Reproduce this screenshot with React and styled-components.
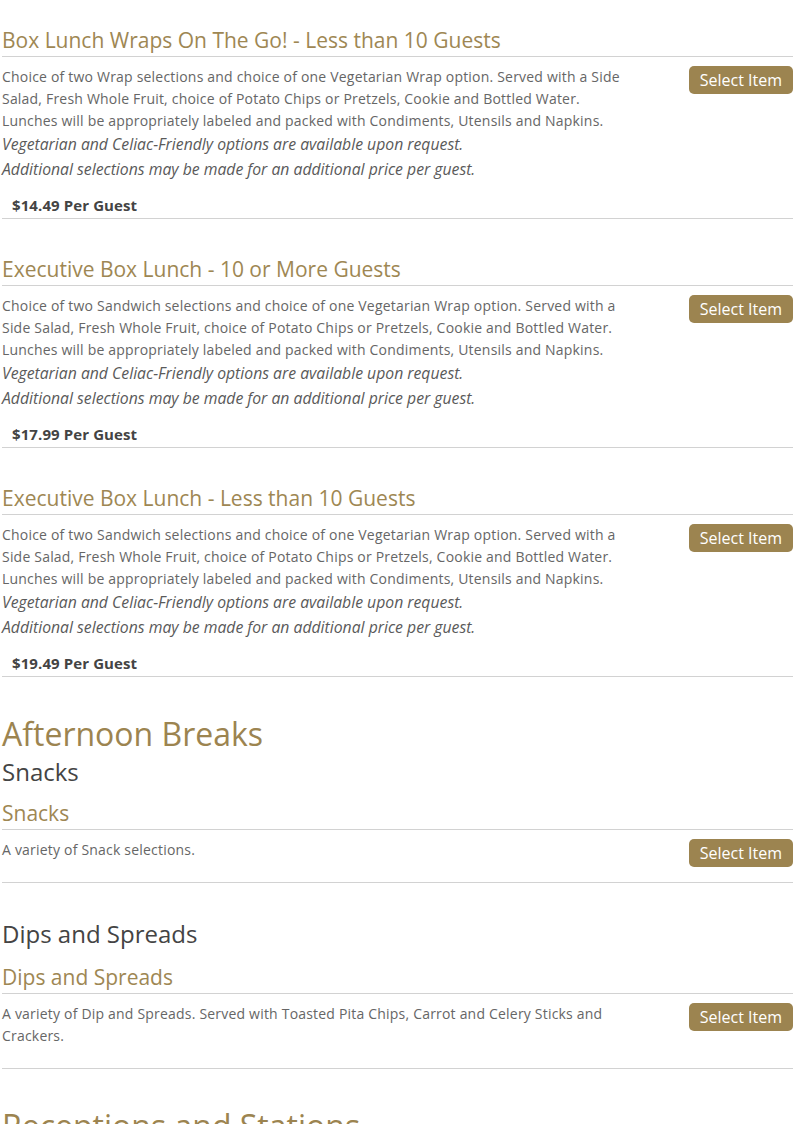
import styled, { createGlobalStyle } from "styled-components";

const GlobalStyle = createGlobalStyle`
  body {
    margin: 0;
    background: #fff;
    font-family: "Open Sans", "Liberation Sans", sans-serif;
    color: #555;
  }
`;

const Page = styled.div`
  width: 791px;
  margin-left: 2px;
  padding-top: 28px;
`;

const Category = styled.h2`
  margin: 38px 0 4px;
  font-size: 32px;
  line-height: 38px;
  font-weight: 400;
  color: #9c8450;
`;

const SubCategory = styled.h3`
  margin: ${({ spaced }) => (spaced ? "36px 0 17px" : "0 0 15px")};
  font-size: 24px;
  line-height: 29px;
  font-weight: 400;
  color: #444;
`;

const Item = styled.div`
  border-bottom: 1px solid #d2d2d2;
  margin-bottom: ${({ last }) => (last ? "0" : "38px")};
`;

const Title = styled.h4`
  margin: 0;
  padding-bottom: 4px;
  font-size: 21px;
  line-height: 24px;
  font-weight: 400;
  color: #9e8753;
  border-bottom: 1px solid #d2d2d2;
`;

const Body = styled.div`
  display: flex;
  justify-content: space-between;
  align-items: flex-start;
  padding-top: 9px;
  padding-bottom: ${({ priced }) => (priced ? "0" : "21px")};
`;

const Text = styled.div`
  width: 80%;
`;

const Desc = styled.p`
  margin: 0;
  font-size: 14px;
  letter-spacing: 0.2px;
  line-height: 22px;
  color: #666;
`;

const Note = styled.p`
  margin: 0;
  font-size: 15.75px;
  line-height: 25px;
  font-style: italic;
  color: #5a5a5a;
`;

const SelectButton = styled.button`
  flex-shrink: 0;
  height: 28px;
  margin-bottom: -7px;
  padding: 0 11px;
  border: none;
  border-radius: 5px;
  background: #9c8450;
  color: #fff;
  font-family: "Open Sans", "Liberation Sans", sans-serif;
  font-size: 16px;
  line-height: 28px;
  cursor: pointer;
`;

const Price = styled.div`
  margin-top: 12px;
  padding: 0 0 2px 10px;
  font-size: 15px;
  letter-spacing: 0.1px;
  line-height: 22px;
  font-weight: 700;
  color: #444;
`;

const notes = [
  "Vegetarian and Celiac-Friendly options are available upon request.",
  "Additional selections may be made for an additional price per guest.",
];

const boxes = [
  {
    title: "Box Lunch Wraps On The Go! - Less than 10 Guests",
    desc: "Choice of two Wrap selections and choice of one Vegetarian Wrap option. Served with a Side Salad, Fresh Whole Fruit, choice of Potato Chips or Pretzels, Cookie and Bottled Water. Lunches will be appropriately labeled and packed with Condiments, Utensils and Napkins.",
    price: "$14.49",
  },
  {
    title: "Executive Box Lunch - 10 or More Guests",
    desc: "Choice of two Sandwich selections and choice of one Vegetarian Wrap option. Served with a Side Salad, Fresh Whole Fruit, choice of Potato Chips or Pretzels, Cookie and Bottled Water. Lunches will be appropriately labeled and packed with Condiments, Utensils and Napkins.",
    price: "$17.99",
  },
  {
    title: "Executive Box Lunch - Less than 10 Guests",
    desc: "Choice of two Sandwich selections and choice of one Vegetarian Wrap option. Served with a Side Salad, Fresh Whole Fruit, choice of Potato Chips or Pretzels, Cookie and Bottled Water. Lunches will be appropriately labeled and packed with Condiments, Utensils and Napkins.",
    price: "$19.49",
  },
];

const MenuItem = ({ title, desc, price, withNotes, last }) => (
  <Item last={last}>
    <Title>{title}</Title>
    <Body priced={!!price}>
      <Text>
        <Desc>{desc}</Desc>
        {withNotes && notes.map((n) => <Note key={n}>{n}</Note>)}
      </Text>
      <SelectButton>Select Item</SelectButton>
    </Body>
    {price && <Price>{price} Per Guest</Price>}
  </Item>
);

const App = () => (
  <>
    <GlobalStyle />
    <Page>
      {boxes.map((b, i) => (
        <MenuItem key={b.title} {...b} withNotes last={i === boxes.length - 1} />
      ))}

      <Category>Afternoon Breaks</Category>
      <SubCategory>Snacks</SubCategory>
      <MenuItem title="Snacks" desc="A variety of Snack selections." last />

      <SubCategory spaced>Dips and Spreads</SubCategory>
      <MenuItem
        title="Dips and Spreads"
        desc="A variety of Dip and Spreads. Served with Toasted Pita Chips, Carrot and Celery Sticks and Crackers."
        last
      />

      <Category>Receptions and Stations</Category>
    </Page>
  </>
);

export default App;
